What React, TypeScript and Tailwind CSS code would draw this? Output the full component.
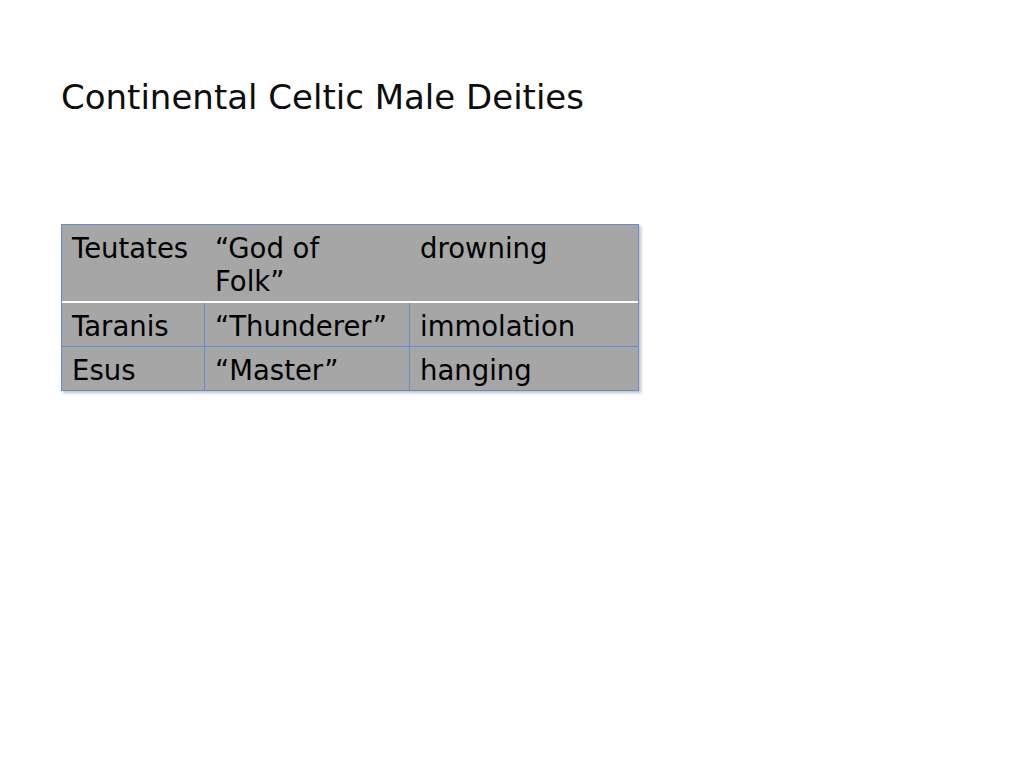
export default function App() {
  const rows = [
    ["Taranis", "“Thunderer”", "immolation"],
    ["Esus", "“Master”", "hanging"],
  ];

  return (
    <div className="w-[1024px] h-[768px] bg-white font-['DejaVu_Sans',sans-serif] text-black">
      <div className="pl-[61px] pt-[75px]">
        <h1 className="text-[34px] leading-[44px] text-[#0d0d0d]">Continental Celtic Male Deities</h1>
      </div>

      {/* Table */}
      <div className="ml-[61px] mt-[105px] w-[578px] border border-[#5f8fcc] bg-[#a6a6a6] shadow-[2px_2px_3px_rgba(0,0,0,0.25)] text-[27.5px] leading-[33px]">
        <div className="grid grid-cols-[143px_205px_1fr] border-b-2 border-white">
          <div className="px-[10px] pt-[7px] pb-[3px]">Teutates</div>
          <div className="px-[10px] pt-[7px] pb-[3px]">
            “God of
            <br />
            Folk”
          </div>
          <div className="px-[10px] pt-[7px] pb-[3px]">drowning</div>
        </div>
        {rows.map((row, i) => (
          <div
            key={row[0]}
            className={[
              "grid grid-cols-[143px_205px_1fr]",
              i === 0 ? "border-b border-[#5f8fcc]" : "",
            ].join(" ")}
          >
            <div className="px-[10px] pt-[7px] pb-[3px] border-r border-[#5f8fcc]">{row[0]}</div>
            <div className="px-[10px] pt-[7px] pb-[3px] border-r border-[#5f8fcc]">{row[1]}</div>
            <div className="px-[10px] pt-[7px] pb-[3px]">{row[2]}</div>
          </div>
        ))}
      </div>
    </div>
  );
}
